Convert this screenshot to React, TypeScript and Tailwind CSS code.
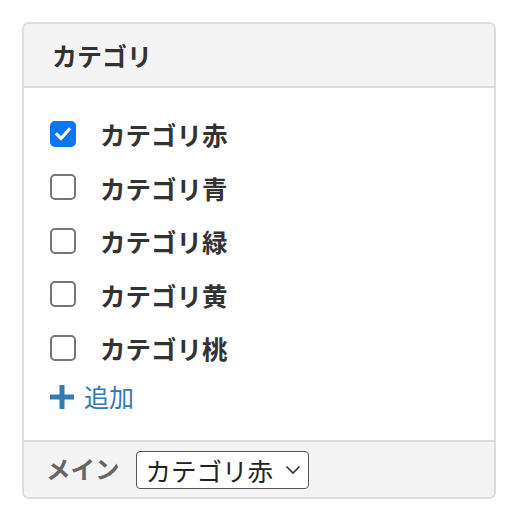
import React from "react";

const items = ["カテゴリ赤", "カテゴリ青", "カテゴリ緑", "カテゴリ黄", "カテゴリ桃"];

function Box({ checked }: { checked: boolean }) {
  if (checked) {
    return (
      <div className="w-[26px] h-[26px] rounded-[5px] bg-[#0b75f5] flex items-center justify-center shrink-0">
        <svg width="18" height="18" viewBox="0 0 18 18">
          <path d="M3 9.5 L7 13.5 L15 4.5" fill="none" stroke="white" strokeWidth="3.2" strokeLinecap="square" />
        </svg>
      </div>
    );
  }
  return <div className="w-[26px] h-[26px] rounded-[5px] border-2 border-[#767676] bg-white shrink-0" />;
}

export default function App() {
  return (
    <div
      className="w-[518px] h-[524px] bg-white pt-[22px] pl-[22px]"
      style={{ fontFamily: '"Noto Sans CJK JP", "Noto Sans", sans-serif' }}
    >
      <div className="w-[474px] h-[477px] border-2 border-[#dddddd] rounded-[7px] overflow-hidden flex flex-col">
        <div className="h-[64px] bg-[#f4f4f4] border-b-2 border-[#dddddd] flex items-center pl-[28px] text-[25px] font-bold text-[#333333] leading-none">
          カテゴリ
        </div>
        <div className="flex-1 bg-white pt-[19px] pl-[26px] flex flex-col">
          {items.map((t, i) => (
            <div key={t} className="h-[53.5px] flex items-center gap-[24px]">
              <Box checked={i === 0} />
              <span className="text-[25.5px] font-bold text-[#333333] leading-none">{t}</span>
            </div>
          ))}
          <div className="h-[44px] flex items-center gap-[10px] text-[#337ab7]">
            <svg width="24" height="24" viewBox="0 0 24 24">
              <path d="M9.5 0 H14.5 V9.5 H24 V14.5 H14.5 V24 H9.5 V14.5 H0 V9.5 H9.5 Z" fill="#337ab7" />
            </svg>
            <span className="text-[25px] leading-none">追加</span>
          </div>
        </div>
        <div className="h-[57px] bg-[#f4f4f4] border-t-2 border-[#dddddd] flex items-center pl-[22px] gap-[16px]">
          <span className="text-[24.5px] font-bold text-[#666666] leading-none">メイン</span>
          <div className="w-[173px] h-[38px] border-[1.5px] border-[#555555] rounded-[4px] bg-white flex items-center pl-[9px] pr-[7px] justify-between">
            <span className="text-[25.5px] text-[#222222] leading-none">カテゴリ赤</span>
            <svg width="16" height="10" viewBox="0 0 16 10">
              <path d="M1.5 1.5 L8 8 L14.5 1.5" fill="none" stroke="#333" strokeWidth="1.6" />
            </svg>
          </div>
        </div>
      </div>
    </div>
  );
}
